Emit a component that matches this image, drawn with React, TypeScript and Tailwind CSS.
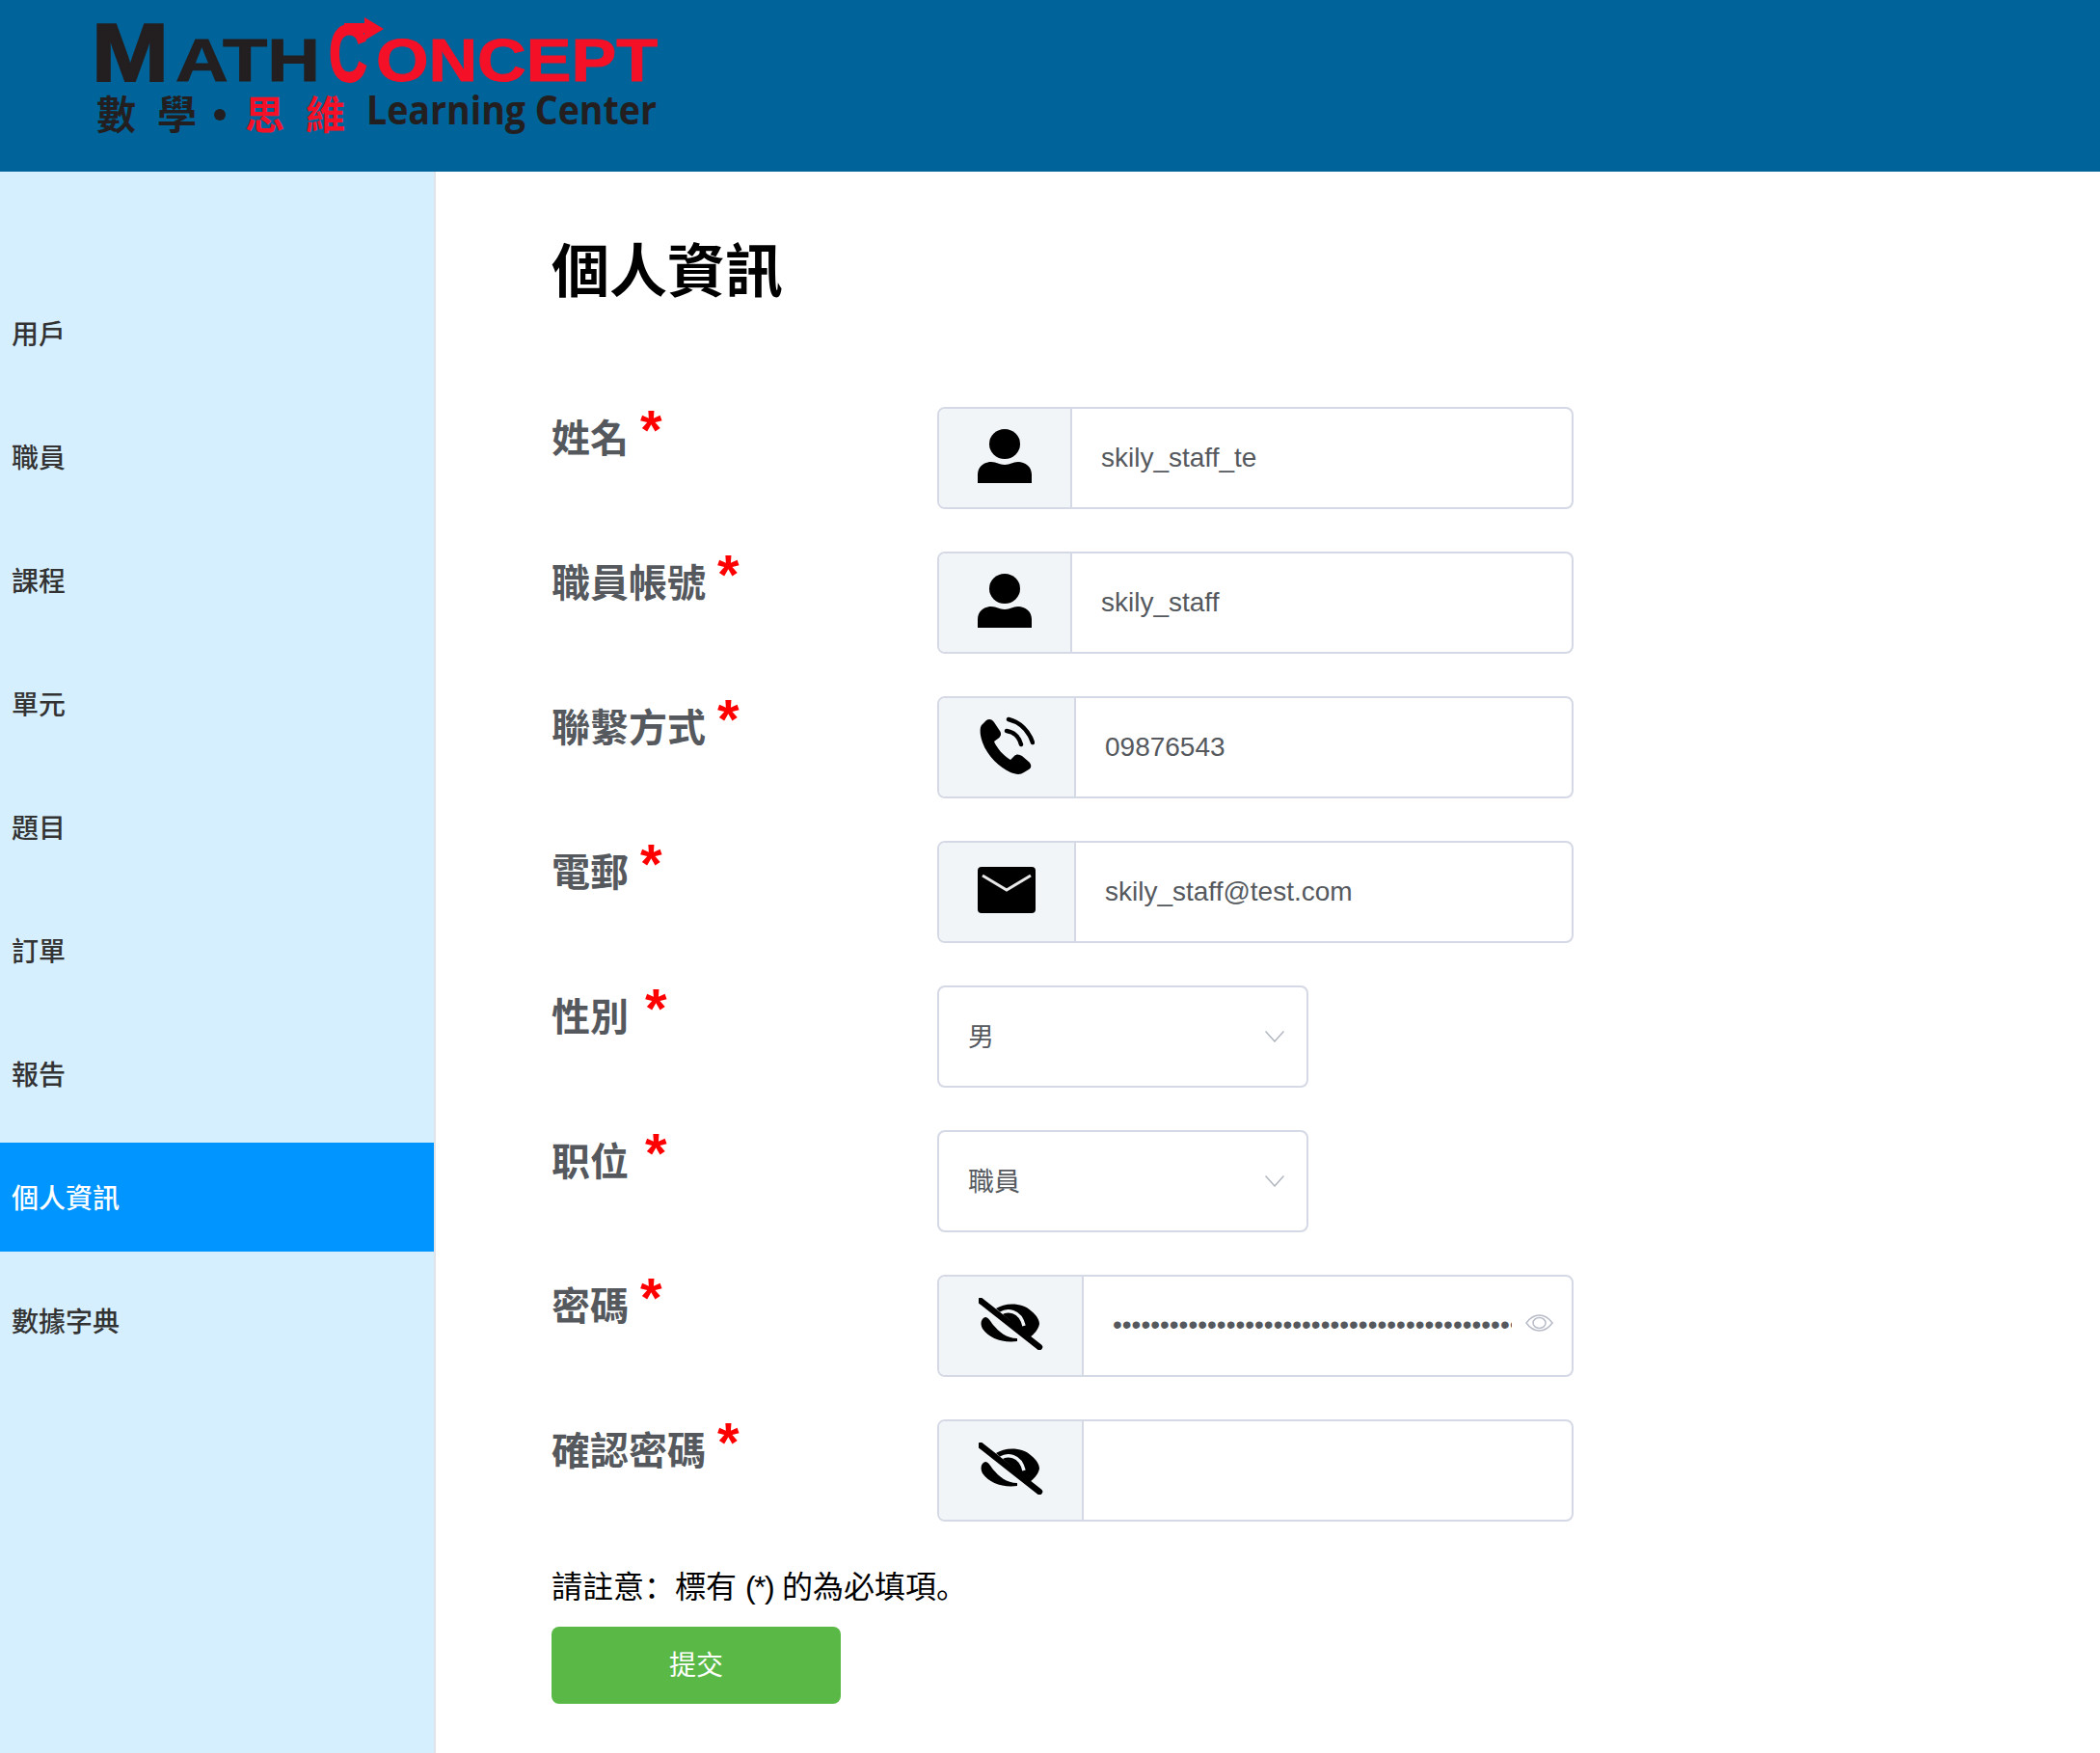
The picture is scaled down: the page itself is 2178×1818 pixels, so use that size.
import React from "react";

const cjk = "font-['Liberation_Sans','Noto_Sans_CJK_TC',sans-serif]";

const menu = ["用戶", "職員", "課程", "單元", "題目", "訂單", "報告", "個人資訊", "數據字典"];

const Logo = () => (
  <svg width="600" height="150" viewBox="0 0 600 150" className="block overflow-visible">
    <g fontFamily="'Liberation Sans', sans-serif" fontWeight="700" fill="#231f20" stroke="#231f20">
      <text x="-4" y="83" fontSize="85" strokeWidth="2" textLength="80" lengthAdjust="spacingAndGlyphs">M</text>
      <text x="83" y="83" fontSize="63" strokeWidth="1" textLength="150" lengthAdjust="spacingAndGlyphs">ATH</text>
    </g>
    <g fontFamily="'Liberation Sans', sans-serif" fontWeight="700" fill="#f41127" stroke="#f41127">
      <text x="242" y="83" fontSize="84" strokeWidth="2" textLength="40" lengthAdjust="spacingAndGlyphs">C</text>
      <polygon strokeWidth="0" points="258,23 279,23 279,17 299,29 279,41 279,33 258,33" />
      <text x="291" y="83" fontSize="63" strokeWidth="1" textLength="292" lengthAdjust="spacingAndGlyphs">ONCEPT</text>
    </g>
    <g fontFamily="'Noto Sans CJK TC', serif" fontWeight="700" fontSize="41">
      <text x="1" y="133" fill="#231f20">數</text>
      <text x="64" y="133" fill="#231f20">學</text>
      <circle cx="129" cy="118" r="6" fill="#231f20" />
      <text x="155" y="133" fill="#f41127">思</text>
      <text x="218" y="133" fill="#f41127">維</text>
    </g>
    <text x="281" y="128" fontFamily="'Open Sans', sans-serif" fontWeight="700" fontSize="41" fill="#231f20" textLength="301" lengthAdjust="spacingAndGlyphs">Learning Center</text>
  </svg>
);

const PersonIcon = () => (
  <svg width="56" height="56" viewBox="0 0 56 56" fill="#000">
    <ellipse cx="28" cy="15.5" rx="16" ry="15.5" />
    <path d="M0 56V47C0 39 7 34 14 34C20 34 22 37 28 37C34 37 36 34 42 34C49 34 56 39 56 47V56Z" />
  </svg>
);

const PhoneIcon = () => (
  <svg width="58" height="60" viewBox="0 0 58 60" fill="none">
    <path
      fill="#000"
      d="M8 4C11 2 14 3 16 6L22 15C24 18 23 21 20 23L16 26C19 33 26 41 33 45L37 41C39 39 42 39 45 41L52 47C55 50 55 53 52 55L47 58C43 61 38 60 33 58C22 53 9 41 4 27C1 19 1 12 3 9Z"
    />
    <path d="M29 15C36 16 42 21 44 29" stroke="#000" strokeWidth="4.5" strokeLinecap="round" />
    <path d="M31 3C43 6 52 15 56 27" stroke="#000" strokeWidth="4.5" strokeLinecap="round" />
  </svg>
);

const MailIcon = () => (
  <svg width="60" height="48" viewBox="0 0 60 48">
    <rect width="60" height="48" rx="4" fill="#000" />
    <path d="M5 9L30 24L55 9" fill="none" stroke="#e8e8e8" strokeWidth="3" />
  </svg>
);

const EyeOffIcon = () => (
  <svg width="67" height="54" viewBox="15 15 67 54">
    <path fill="#000" d="M33 26C42 20 60 19 70 29C75 33 78 38 78 42C77 48 72 53 68 56Z" />
    <path fill="none" stroke="#f2f5f8" strokeWidth="3.5" d="M38 31C44 27 58 27 62 44" />
    <path fill="#000" d="M22 35C18 36 16 41 19 47C26 57 40 62 55 60L55 57C44 57 36 50 30 43C27 39 25 35 22 35Z" />
    <path fill="none" stroke="#000" strokeWidth="6.5" strokeLinecap="round" d="M17 18L78 66" />
  </svg>
);

const EyeIcon = () => (
  <svg width="29" height="18" viewBox="0 0 29 18" fill="none" stroke="#b8bcc8" strokeWidth="1.5">
    <path d="M1 9C5 3.5 9 1 14.5 1C20 1 24 3.5 28 9C24 14.5 20 17 14.5 17C9 17 5 14.5 1 9Z" />
    <ellipse cx="14.5" cy="9" rx="6.5" ry="5.5" />
  </svg>
);

const Chevron = () => (
  <svg width="20" height="12" viewBox="0 0 20 12" fill="none" stroke="#b0b5c0" strokeWidth="1.5">
    <path d="M0.5 0.5L10 11L19.5 0.5" />
  </svg>
);

const Label = ({ text, gap }: { text: string; gap: string }) => (
  <div className="w-[400px] shrink-0 pt-[3px] flex items-start">
    <span className="text-[40px] leading-[60px] font-bold text-[#55595e]">{text}</span>
    <span className={`${gap} -mt-[8px] text-[58px] leading-[58px] font-bold text-[#ff0000]`}>*</span>
  </div>
);

const InputRow = ({
  label,
  icon,
  addon,
  children,
}: {
  label: string;
  icon: React.ReactNode;
  addon: string;
  children?: React.ReactNode;
}) => (
  <div className="flex h-[106px] mb-[44px]">
    <Label text={label} gap="ml-[12px]" />
    <div className="w-[660px] flex border-2 border-[#d5d9e5] rounded-lg overflow-hidden">
      <div className={`${addon} shrink-0 bg-[#f2f5f8] border-r-2 border-[#d5d9e5] flex items-center justify-center pb-[5px]`}>
        {icon}
      </div>
      <div className="flex-1 min-w-0 flex items-center pl-[30px] text-[28px] text-[#55595e]">{children}</div>
    </div>
  </div>
);

const SelectRow = ({ label, value }: { label: string; value: string }) => (
  <div className="flex h-[106px] mb-[44px]">
    <Label text={label} gap="ml-[17px]" />
    <div className="w-[385px] flex items-center justify-between border-2 border-[#d5d9e5] rounded-lg pl-[30px] pr-[23px] text-[27px] text-[#55595e]">
      <span className="pt-[2px]">{value}</span>
      <Chevron />
    </div>
  </div>
);

export default function App() {
  return (
    <div className={`${cjk} min-h-screen flex flex-col bg-white`}>
      <header className="h-[178px] bg-[#006399] pl-[99px] pt-[1px] shrink-0">
        <Logo />
      </header>
      <div className="flex flex-1">
        <aside className="w-[452px] shrink-0 bg-[#d6efff] border-r-2 border-[#e0e4e8] pt-[111px]">
          {menu.map((item) => (
            <div
              key={item}
              className={`h-[113px] mb-[15px] flex items-center pl-[12px] pt-[4px] text-[28px] font-medium ${
                item === "個人資訊" ? "bg-[#0095ff] text-white" : "text-[#333333]"
              }`}
            >
              {item}
            </div>
          ))}
        </aside>
        <main className="flex-1 pl-[120px]">
          <h1 className="h-[244px] pt-[67px] text-[60px] leading-[76px] font-bold text-black">個人資訊</h1>
          <InputRow label="姓名" icon={<PersonIcon />} addon="w-[138px]">skily_staff_te</InputRow>
          <InputRow label="職員帳號" icon={<PersonIcon />} addon="w-[138px]">skily_staff</InputRow>
          <InputRow label="聯繫方式" icon={<PhoneIcon />} addon="w-[142px]">09876543</InputRow>
          <InputRow label="電郵" icon={<MailIcon />} addon="w-[142px]">skily_staff@test.com</InputRow>
          <SelectRow label="性別" value="男" />
          <SelectRow label="职位" value="職員" />
          <InputRow label="密碼" icon={<EyeOffIcon />} addon="w-[150px]">
            <div className="w-[414px] overflow-hidden whitespace-nowrap mb-[2px]">{"•".repeat(60)}</div>
            <div className="ml-[14px] mb-[6px]">
              <EyeIcon />
            </div>
          </InputRow>
          <InputRow label="確認密碼" icon={<EyeOffIcon />} addon="w-[150px]" />
          <p className="text-[32px] leading-[48px] text-black font-['Liberation_Sans','Noto_Sans_CJK_SC',sans-serif]">
            請註意：標有 <span className="tracking-[-1.5px]">(*)</span> 的為必填項。
          </p>
          <button className="mt-[17px] pt-[2px] w-[300px] h-[80px] bg-[#5ab946] rounded-lg text-[28px] text-white">提交</button>
        </main>
      </div>
    </div>
  );
}
